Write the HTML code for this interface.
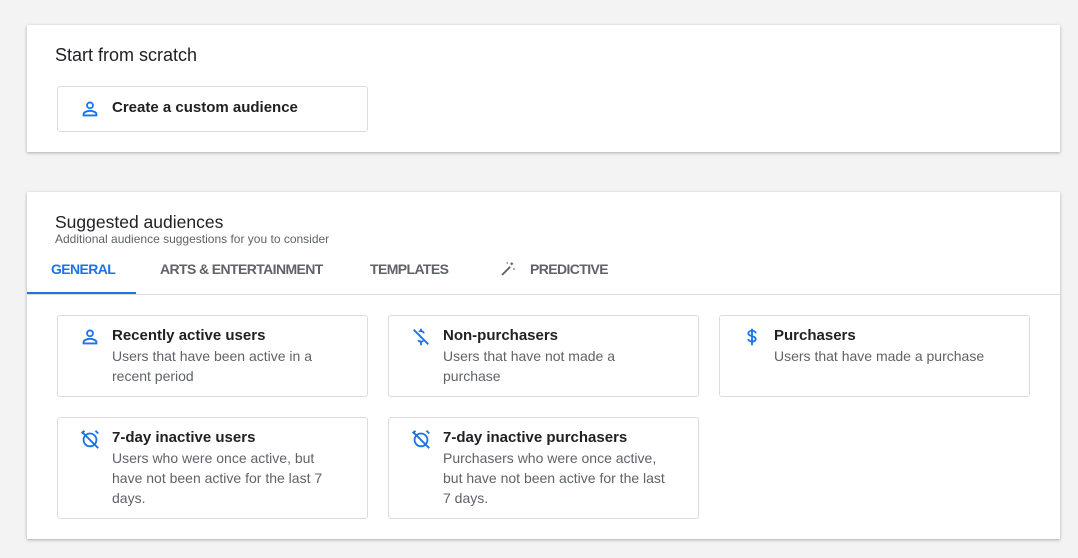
<!DOCTYPE html><html><head><style>
body{margin:0;background:#f3f3f3;font-family:"Liberation Sans",sans-serif;width:1078px;height:558px;overflow:hidden;position:relative}
.card{position:absolute;left:27px;width:1033px;background:#fff;box-shadow:0 1px 3px rgba(0,0,0,.3)}
.t{position:absolute;font-size:17.5px;color:#202124}
.box{position:absolute;border:1px solid #dadce0;border-radius:3px;background:#fff;box-sizing:border-box;width:311px}
.box svg{position:absolute;left:21px;top:10px}
.h{position:absolute;left:54px;top:11px;font-size:15px;font-weight:bold;color:#202124}
.d{position:absolute;left:54px;top:30px;font-size:14px;line-height:20px;color:#5f6368;width:230px}
.tab{position:absolute;top:69px;font-size:14px;color:#5f6368;font-weight:bold;letter-spacing:-.6px}
</style></head><body>
<div class="card" style="top:25px;height:127px">
<div class="t" style="left:28px;top:20px;font-size:18px">Start from scratch</div>
<div class="box" style="left:30px;top:61px;height:46px">
<svg width="22" height="22" viewBox="0 0 24 24" style="top:11px"><circle cx="12" cy="8" r="3.2" fill="none" stroke="#1a73e8" stroke-width="2"/><path d="M5 19v-1.5c0-2 4-3.5 7-3.5s7 1.5 7 3.5V19z" fill="none" stroke="#1a73e8" stroke-width="2"/></svg>
<div class="h" style="top:12px">Create a custom audience</div></div>
</div>
<div class="card" style="top:192px;height:347px">
<div class="t" style="left:28px;top:20px">Suggested audiences</div>
<div style="position:absolute;left:28px;top:40px;font-size:12px;color:#5f6368">Additional audience suggestions for you to consider</div>
<div class="tab" style="left:24px;color:#1a73e8">GENERAL</div>
<div class="tab" style="left:133px">ARTS &amp; ENTERTAINMENT</div>
<div class="tab" style="left:343px">TEMPLATES</div>
<svg style="position:absolute;left:472px;top:68px" width="18" height="18" viewBox="0 0 24 24"><path d="M4 20L15 9" stroke="#5f6368" stroke-width="2.5"/><path d="M17 3v4M15 5h4M20 11v2M19 12h2M11 3v2" stroke="#5f6368" stroke-width="1.5"/></svg>
<div class="tab" style="left:503px">PREDICTIVE</div>
<div style="position:absolute;left:0;top:100px;width:109px;height:2px;background:#1a73e8"></div>
<div style="position:absolute;left:0;top:102px;width:100%;height:1px;background:#dadce0"></div>
<div class="box" style="left:30px;top:123px;height:82px">
<svg width="22" height="22" viewBox="0 0 24 24"><circle cx="12" cy="8" r="3.2" fill="none" stroke="#1a73e8" stroke-width="2"/><path d="M5 19v-1.5c0-2 4-3.5 7-3.5s7 1.5 7 3.5V19z" fill="none" stroke="#1a73e8" stroke-width="2"/></svg>
<div class="h">Recently active users</div><div class="d">Users that have been active in a recent period</div></div>
<div class="box" style="left:361px;top:123px;height:82px">
<svg width="22" height="22" viewBox="0 0 24 24"><path d="M4 4l16 16" stroke="#1a73e8" stroke-width="2"/><path d="M15 8c0-1.5-1.3-2.5-3-2.5-1 0-1.8.3-2.3.8M12 3v3M12 18v3M9 15.5c.5 1 1.6 1.5 3 1.5 1.2 0 2-.3 2.5-.8" fill="none" stroke="#1a73e8" stroke-width="2"/></svg>
<div class="h">Non-purchasers</div><div class="d">Users that have not made a purchase</div></div>
<div class="box" style="left:692px;top:123px;height:82px">
<svg width="22" height="22" viewBox="0 0 24 24"><path d="M12 3v18M16 8c0-1.8-1.8-2.8-4-2.8S8 6.3 8 8s1.6 2.4 4 3 4 1.3 4 3.2-1.8 2.8-4 2.8-4-1-4-2.8" fill="none" stroke="#1a73e8" stroke-width="2"/></svg>
<div class="h">Purchasers</div><div class="d">Users that have made a purchase</div></div>
<div class="box" style="left:30px;top:225px;height:102px">
<svg width="22" height="22" viewBox="0 0 24 24"><circle cx="12" cy="13" r="7" fill="none" stroke="#1a73e8" stroke-width="2"/><path d="M3 4l18 18M3 6l3-3M18 3l3 3" stroke="#1a73e8" stroke-width="2"/></svg>
<div class="h">7-day inactive users</div><div class="d">Users who were once active, but have not been active for the last 7 days.</div></div>
<div class="box" style="left:361px;top:225px;height:102px">
<svg width="22" height="22" viewBox="0 0 24 24"><circle cx="12" cy="13" r="7" fill="none" stroke="#1a73e8" stroke-width="2"/><path d="M3 4l18 18M3 6l3-3M18 3l3 3" stroke="#1a73e8" stroke-width="2"/></svg>
<div class="h">7-day inactive purchasers</div><div class="d">Purchasers who were once active, but have not been active for the last 7 days.</div></div>
</div>
</body></html>
